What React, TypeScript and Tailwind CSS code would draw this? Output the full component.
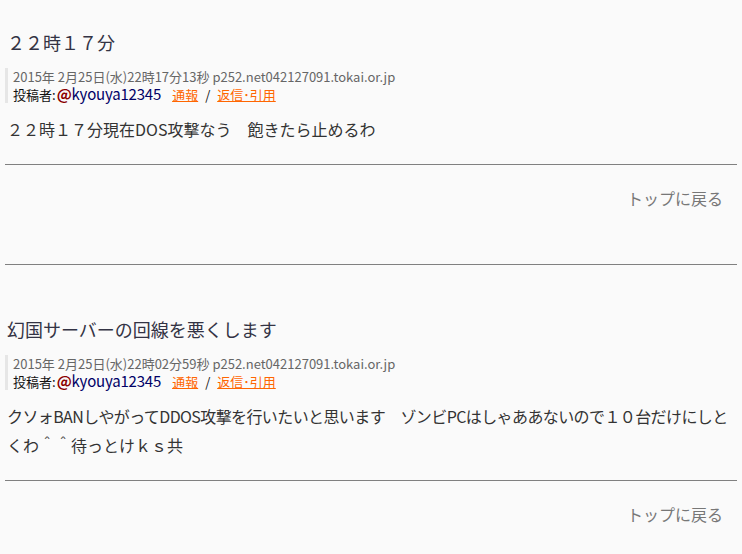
import React from "react";

const font = "font-['Noto_Sans_CJK_JP',sans-serif]";

function Meta({ date }: { date: string }) {
  return (
    <div className="mt-[14px] ml-[5px] border-l-[3px] border-[#e6e6e6] pl-[5px]">
      <div className="h-[17px] text-[13px] leading-[17px] text-[#666]">{date}</div>
      <div className="h-[18px] whitespace-nowrap text-[13px] leading-[18px] text-[#111]">
        投稿者:
        <span className="pl-[1px] text-[15px] leading-[18px] tracking-[-0.2px] text-[#000066]">
          <span className="font-bold text-[#8b0000]">@</span>kyouya12345
        </span>
        <a href="#" className="ml-[11px] text-[#ff6600] underline">
          通報
        </a>
        <span className="mx-[7px]">/</span>
        <a href="#" className="text-[#ff6600] underline">
          返信･引用
        </a>
      </div>
    </div>
  );
}

function Post({
  title,
  date,
  children,
}: {
  title: string;
  date: string;
  children: React.ReactNode;
}) {
  return (
    <div>
      <h2 className="pl-[7px] text-[18px] leading-[24px] text-[#333344]">{title}</h2>
      <Meta date={date} />
      <div className="mt-[12px] px-[7px] text-[16px] leading-[29px] text-[#333]">{children}</div>
      <hr className="mx-[5px] mt-[20px] border-t border-[#808080]" />
      <div className="mt-[21px] pr-[19px] text-right text-[16px] leading-[24px] text-[#777]">
        <a href="#">トップに戻る</a>
      </div>
    </div>
  );
}

export default function App() {
  return (
    <main className={`min-h-[554px] w-[742px] bg-[#fafafa] pt-[30px] ${font}`}>
      <Post title="２２時１７分" date="2015年 2月25日(水)22時17分13秒 p252.net042127091.tokai.or.jp">
        <p>２２時１７分現在DOS攻撃なう　飽きたら止めるわ</p>
      </Post>
      <hr className="mx-[5px] mt-[54px] border-t border-[#808080]" />
      <div className="mt-[52px]">
        <Post
          title="幻国サーバーの回線を悪くします"
          date="2015年 2月25日(水)22時02分59秒 p252.net042127091.tokai.or.jp"
        >
          <p className="whitespace-nowrap tracking-[-0.6px]">
            クソォBANしやがってDDOS攻撃を行いたいと思います　ゾンビPCはしゃああないので１０台だけにしと
          </p>
          <p>くわ＾＾待っとけｋｓ共</p>
        </Post>
      </div>
    </main>
  );
}
